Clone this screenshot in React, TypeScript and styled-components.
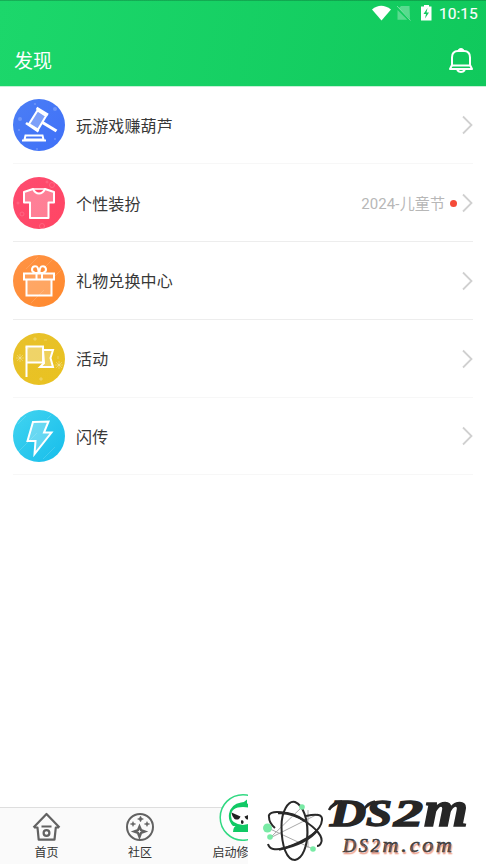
import React from 'react';
import styled, { createGlobalStyle } from 'styled-components';

const Global = createGlobalStyle`
  * { box-sizing: border-box; }
  body { margin: 0; background: #fff; font-family: Roboto, "Noto Sans CJK SC", sans-serif; overflow: hidden; }
  svg { display: block; flex: none; }
`;
const Page = styled.div`width: 486px; height: 864px; display: flex; flex-direction: column; overflow: hidden; background: #fff;`;
const Header = styled.header`
  height: 86px; flex: none; color: #fff;
  background: linear-gradient(#00000030, #00000030) 0 0 / 100% 1px no-repeat, linear-gradient(102deg, #1cd76b 0%, #10c95c 100%);
  box-shadow: 0 1px 0 #c5f1d7;
`;
const StatusBar = styled.div`height: 28px; display: flex; justify-content: flex-end; padding-right: 8px;`;
const Clock = styled.time`font: 400 15.5px/28px Roboto, sans-serif; width: 39px; white-space: nowrap; -webkit-text-stroke: .15px #fff;`;
const TitleBar = styled.div`height: 58px; display: flex; justify-content: space-between; padding: 18px 12px 0 14px;`;
const Title = styled.h1`margin: 1px 0 0; font-weight: 400; font-size: 19px; line-height: 29px;`;
const List = styled.main`flex: 1; padding: .4px 13px 0;`;
const Row = styled.div<{ $faint?: boolean }>`
  height: 77.8px; display: flex; align-items: center; padding-top: 1px;
  border-bottom: 1px solid ${p => (p.$faint ? '#f7f7f7' : '#ededed')};
`;
const Label = styled.span`font-size: 16px; letter-spacing: .15px; color: #383838; margin: 0 0 1px 11px; flex: 1;`;
const Note = styled.span`font-size: 15px; color: #b7b7b7; letter-spacing: .12px; margin-bottom: 2px;`;
const Dot = styled.i`width: 7px; height: 7px; border-radius: 50%; background: #f54a38; margin: 0 4px 0 5px;`;
const Footer = styled.footer`
  position: relative; height: 57px; flex: none; display: flex; background: #fafafa; border-top: 1px solid #dedede;
`;
const Tab = styled.div<{ $w: number }>`
  width: ${p => p.$w}px; display: flex; flex-direction: column; align-items: center; padding-top: 4px; flex: none;
`;
const TabText = styled.span`font-size: 12px; line-height: 18px; margin-top: 2px; color: #333; white-space: nowrap;`;
const RaisedIcon = styled.div`position: absolute; top: -15px; left: 219px;`;
const RaisedLabel = styled(TabText)`margin: 32px 0 0 0;`;
const Watermark = styled.div`
  position: absolute; left: 248px; right: 0; top: -18px; bottom: 0; background: #fff;
  svg { overflow: visible; }
`;

const Chevron = () => (
  <svg width="12" height="20" viewBox="0 0 12 20" fill="none" stroke="#d0d0d0" strokeWidth="1.800"><path d="M2 1.500 10.500 10 2 18.500" /></svg>
);

const Wrap = ({ color, to, children }: { color: string; to: string; children: React.ReactNode }) => (
  <svg width="52" height="52" viewBox="0 0 52 52" fill="none" stroke="#fff" strokeWidth="2">
    <defs><linearGradient id={'g' + color.slice(1)} x1="0" y1="0" x2="1" y2="1"><stop stopColor={color} /><stop offset="1" stopColor={to} /></linearGradient></defs>
    <circle cx="26" cy="26" r="26" fill={`url(#g${color.slice(1)})`} stroke="none" />
    {children}
  </svg>
);
const Gavel = () => (
  <Wrap color="#4b7ef5" to="#3f70f8">
    <g fill="#fff" stroke="none" opacity=".22"><circle cx="7" cy="20" r="2" /><circle cx="42" cy="10" r="2" /><circle cx="22" cy="5" r="1" /><circle cx="6" cy="31" r="1" /><circle cx="42" cy="40" r="1" /><circle cx="24" cy="50" r="1" /></g>
    <path d="M24.500 11.500 33 17 25 30.500 16 25Z" fill="#fff" fillOpacity=".3" />
    <path d="m23.500 9 11.500 7M13 24l12.500 8.500" strokeWidth="2.700" />
    <path d="m29.500 23.500 14 8.500" strokeWidth="3.200" />
    <path d="M12.500 36.500h17l1 4h-19ZM9 41.500h24" />
  </Wrap>
);
const Shirt = () => (
  <Wrap color="#fe4c70" to="#ff4563">
    <g opacity=".16" strokeWidth="1"><circle cx="39" cy="8" r="2.500" /><circle cx="9" cy="37" r="2" /><circle cx="29" cy="49" r="2.500" /><circle cx="5" cy="26" r="1" /><circle cx="34" cy="5" r="1" /></g>
    <path d="M20 12 11 15v10.500h6V41h18.500V25.500h5.500V15L32 12c-3 6-9 6-12 0Z" fill="#fff" fillOpacity=".3" strokeLinejoin="round" />
    <path d="M20 12h12" strokeWidth="1.500" />
  </Wrap>
);
const Gift = () => (
  <Wrap color="#ff9345" to="#ff892d">
    <path d="M13 14 25 2M18 48 31 35M33 11l8-8M39 24l9-9" opacity=".15" strokeWidth="1" />
    <path d="M13.500 25v15.500h25V25" fill="#fff" fillOpacity=".22" />
    <path d="M11 18.500h30v6H11zM23.500 18v6M29 18v6" fill="#ff9f58" />
    <path d="M25.500 18h-3.500c-5-2-3-7 .5-6.800 2.500 0 3 3.300 3 6.800ZM26.500 18H30c5-2 3-7-.5-6.800-2.500 0-3 3.300-3 6.800Z" />
  </Wrap>
);
const Flag = () => (
  <Wrap color="#e8c12c" to="#e9c220">
    <g opacity=".28" strokeWidth="1"><path d="M7 21v8M3 25h8M4 22l6 6M10 22l-6 6M46 28v8M42 32h8M43 29l6 6M49 29l-6 6M22 4v4M20 6h4M28 44v4M26 46h4M45 23v3M12 14l4 2M31 7h3" /></g>
    <path d="M30 17h10l-2.500 8 2.500 9H27l4-4Z" fill="#fff" fillOpacity=".25" />
    <path d="M13.500 44V13.500H30v16H13.500" /><path d="M14 14h16v15H14Z" fill="#fff" fillOpacity=".3" stroke="none" />
  </Wrap>
);
const Bolt = () => (
  <Wrap color="#42d4f0" to="#16bdeb">
    <path d="M5 14 13 6M5 42l19-19M30 49l12-12M34 9l4-4" opacity=".15" strokeWidth="1" />
    <path d="M20 12 35.500 11.500 31 22.500h7.500L21.500 44 22.500 31h-8Z" fill="#fff" fillOpacity=".28" />
  </Wrap>
);
const Status = () => (
  <svg width="68" height="28" viewBox="0 0 68 28">
    <path d="M1 9.500Q10 2 20 9.500L10.500 20.500Z" fill="#fff" />
    <path d="M38.500 6H30l-2 2 11 11ZM26.500 10v9.800h9.800Z" fill="#fff" opacity=".3" /><path d="m26 6 13.500 14.500" stroke="#fff" opacity=".42" />
    <path d="M50 6.500h3V5h5v1.500h2.500v14H50Z" fill="#fff" /><path d="m56.500 8-4 6h2.500l-1 4.500 4-6h-2.500Z" fill="#13c960" />
  </svg>
);
const Bell = () => (
  <svg width="26" height="28" viewBox="0 0 26 28" fill="none" stroke="#fff" strokeWidth="2" strokeLinejoin="round">
    <path d="M4 19V11.500Q4 5 10 5h6q6 0 6 6.500V19l2 4H2Z" /><path d="M4 19.500h18M11 5V4q2-2 4 0v1M9 24q4 4 8 0" />
  </svg>
);
const Home = () => (
  <svg width="30" height="30" viewBox="0 0 30 30" fill="none" stroke="#626262" strokeWidth="2.200" strokeLinejoin="round">
    <path d="M1.500 15.500 14.500 2 27.500 15.500M2 15.500h3.500L6.700 27.700h15.800l1.300-12.200H27M9.500 14.500h10" /><circle cx="14.500" cy="21" r="2.900" />
  </svg>
);
const Community = () => (
  <svg width="30" height="30" viewBox="0 0 30 30" fill="none" stroke="#626262">
    <circle cx="15" cy="15" r="13" strokeWidth="2" /><path d="m14.500 14.500 1.500 3.500 4 1.500-4 1.500-1.500 4-1.500-4-4-1.500 4-1.500Z" strokeWidth="2.300" />
    <path d="m15.500 4 1 2 2 1-2 1-1 2-1-2-2-1 2-1ZM8 9.500l.8 1.700 2 .8-2 .8L8 14.500l-.8-1.700-2-.8 2-.8ZM22 9.500l.8 1.700 2 .8-2 .8-.8 1.700-.8-1.700-2-.8 2-.8Z" fill="#626262" strokeWidth=".4" />
  </svg>
);
const Ninja = () => (
  <svg width="48" height="48" viewBox="0 0 48 48">
    <circle cx="24" cy="24.500" r="22.800" fill="#fff" stroke="#31d982" strokeWidth="1.500" />
    <path d="M14 33Q9 28 10 21 12 11 22 9.500q4-.5 6-3v4q9 2 10 11 0 7-4 12Z" fill="#11c965" />
    <path d="M12 23q0-9 12-9t12 9q0 8-12 9-12-1-12-9Z" fill="#fff" />
    <path d="m12.500 19.500 9 4q-1.500 4.500-6 2.500-2.500-2-3-6.500ZM35.500 19.500l-10 4q1.500 4.500 6 2.500 3-2 4-6.500ZM22 27.500q3-1 2.500 2.500-1.500 2-2.500 0Z" fill="#222" />
    <path d="M14 39q0-6 5-7 5 2 12 0 4 2 4 7Z" fill="#11c965" />
  </svg>
);
const Brand = () => (
  <svg width="238" height="74" viewBox="0 0 238 74" fill="none">
    <g stroke="#aaa" strokeWidth="1"><path d="M54 17 24 46M20 38 65 59M24 47 70 24M60 20v38" /></g>
    <g stroke="#292929" strokeWidth="2">
      <path d="M33.500 36C33.500 22 40 10 47 12 64 19 63 67 47 70 39 70 33.500 57 33.500 36Z" />
      <path d="M21 27c-2-8 20-6 34 3 13 8 21 17 18 23q-1 3-4 3" />
      <path d="M21 27q0 6 6 11M20 54q2 8 17 4 36-13 37-28 1-8-16-4" />
      <path d="M30 23q14-1 27 8M31 59.500q28-6 38-19" strokeWidth="2.700" />
    </g>
    <g fill="#79eaa5"><circle cx="19.500" cy="38" r="4.500" /><circle cx="22" cy="47" r="2.800" /><circle cx="54" cy="17" r="2.800" /><circle cx="65" cy="59" r="2.800" /></g>
    <g fill="#262626" stroke="#262626" strokeWidth="1.500" fontFamily="Liberation Serif, serif" fontWeight="700" fontStyle="italic">
      <text x="82" y="36" fontSize="38" textLength="36" lengthAdjust="spacingAndGlyphs">D</text>
      <text x="118" y="36" fontSize="38" textLength="26" lengthAdjust="spacingAndGlyphs">S</text>
      <text x="146" y="36" fontSize="38" textLength="29" lengthAdjust="spacingAndGlyphs">2</text>
      <text x="176" y="36" fontSize="50" textLength="44" lengthAdjust="spacingAndGlyphs">m</text>
      <path d="M81 20q4-8 13-8.500M116 20q3-7 11-8.500" strokeWidth="2.500" />
    </g>
    <text x="95" y="62" textLength="109" fontFamily="Liberation Serif, serif" fontStyle="italic" fontSize="18" fill="#383838" stroke="#383838" strokeWidth=".6" style={{ textShadow: '1px 2px 1px #eea18e' }}>
      DS2<tspan fontSize="22">m.com</tspan>
    </text>
  </svg>
);

const rows = [
  { label: '玩游戏赚葫芦', Icon: Gavel, faint: true },
  { label: '个性装扮', Icon: Shirt, note: '2024-儿童节' },
  { label: '礼物兑换中心', Icon: Gift },
  { label: '活动', Icon: Flag, faint: true },
  { label: '闪传', Icon: Bolt, faint: true },
];

export default function App() {
  return (
    <Page>
      <Global />
      <Header>
        <StatusBar><Status /><Clock>10:15</Clock></StatusBar>
        <TitleBar><Title>发现</Title><Bell /></TitleBar>
      </Header>
      <List>
        {rows.map(({ label, Icon, note, faint }) => (
          <Row key={label} $faint={faint}>
            <Icon /><Label>{label}</Label>
            {note && <><Note>{note}</Note><Dot /></>}
            <Chevron />
          </Row>
        ))}
      </List>
      <Footer>
        <Tab $w={93}><Home /><TabText>首页</TabText></Tab>
        <Tab $w={94}><Community /><TabText>社区</TabText></Tab>
        <Tab $w={111}><RaisedIcon><Ninja /></RaisedIcon><RaisedLabel>启动修改器</RaisedLabel></Tab>
        <Watermark><Brand /></Watermark>
      </Footer>
    </Page>
  );
}
